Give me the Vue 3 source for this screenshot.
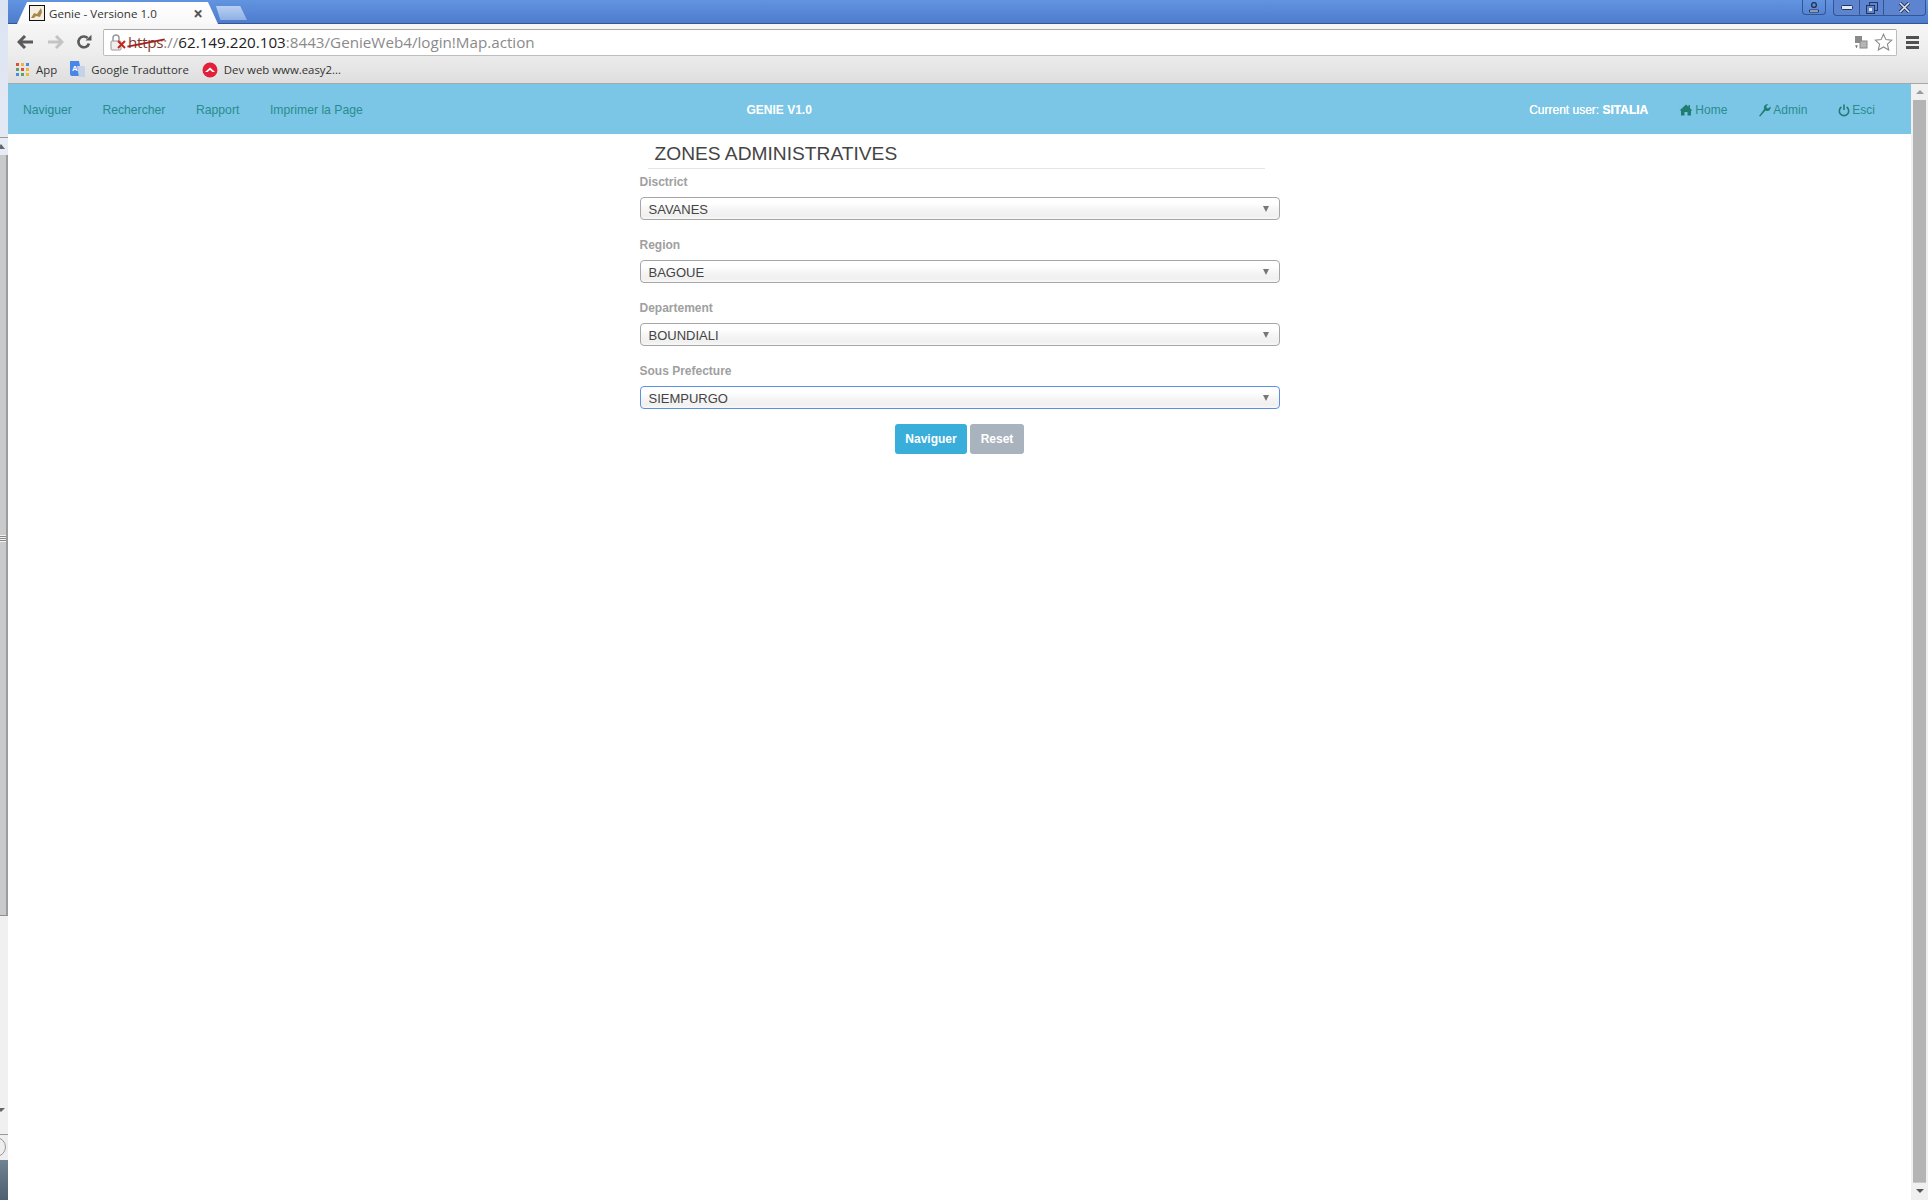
<script setup>
const links = ['Naviguer', 'Rechercher', 'Rapport', 'Imprimer la Page']
const fields = [
  { label: 'Disctrict', value: 'SAVANES' },
  { label: 'Region', value: 'BAGOUE' },
  { label: 'Departement', value: 'BOUNDIALI' },
  { label: 'Sous Prefecture', value: 'SIEMPURGO', focus: true },
]
const appColors = ['#d9503f', '#f2b632', '#4a8be8', '#58a55c', '#d9503f', '#f2b632', '#4a8be8', '#58a55c', '#f2b632']
</script>

<template>
  <div class="screen">
    <aside class="behind">
      <div class="behind-top"></div>
      <div class="behind-arrow up"></div>
      <div class="behind-thumb"><span class="grip"></span></div>
      <div class="behind-rest"><div class="behind-arrow down"></div></div>
      <div class="behind-round"><span></span></div>
      <div class="behind-task"></div>
    </aside>

    <div class="window">
      <header class="titlebar">
        <div class="tab">
          <svg class="favicon" width="16" height="16" viewBox="0 0 16 16">
            <rect x="0.5" y="0.5" width="15" height="15" fill="#f4efe2" stroke="#111" />
            <path d="M2 13 L5 8 L8 9 L12 3 L13 7 L11 12 L7 11 L5 13 Z" fill="#a8874a" />
          </svg>
          <span class="tab-title">Genie - Versione 1.0</span>
          <span class="tab-close">×</span>
        </div>
        <div class="new-tab"></div>
        <div class="win-controls">
          <div class="win-btn user">
            <svg width="12" height="11" viewBox="0 0 12 11"><circle cx="6" cy="3" r="2.4" fill="none" stroke="#26345a" stroke-width="1.4" /><path d="M1.5 10 V8 H10.5 V10 Z" fill="#fff" stroke="#26345a" /></svg>
          </div>
          <div class="win-group">
            <div class="win-btn min"><svg width="12" height="6" viewBox="0 0 12 6"><rect x="0.5" y="0.5" width="11" height="4" rx="1" fill="#dfe7f5" stroke="#26345a" /></svg></div>
            <div class="win-btn max"><svg width="12" height="12" viewBox="0 0 12 12"><rect x="3.5" y="0.5" width="8" height="8" fill="none" stroke="#26345a" /><rect x="0.5" y="3.5" width="8" height="8" fill="#5c84d0" stroke="#26345a" /><rect x="3" y="6" width="3" height="3" fill="#dfe7f5" /></svg></div>
            <div class="win-btn close"><svg width="13" height="11" viewBox="0 0 13 11"><path d="M2 1 L11 10 M11 1 L2 10" stroke="#26345a" stroke-width="3.4" /><path d="M2 1 L11 10 M11 1 L2 10" stroke="#dfe7f5" stroke-width="1.6" /></svg></div>
          </div>
        </div>
      </header>

      <div class="toolbar">
        <svg class="tool back" width="18" height="14" viewBox="0 0 18 14"><path d="M8 1 L2 7 L8 13 M2 7 H16" fill="none" stroke="#5a5a5a" stroke-width="3" /></svg>
        <svg class="tool fwd" width="18" height="14" viewBox="0 0 18 14"><path d="M10 1 L16 7 L10 13 M16 7 H2" fill="none" stroke="#c4c4c4" stroke-width="3" /></svg>
        <svg class="tool reload" width="16" height="16" viewBox="0 0 16 16"><path d="M13 9.5 A5.4 5.4 0 1 1 11.6 4" fill="none" stroke="#5a5a5a" stroke-width="2.6" /><path d="M9.5 6.5 H15.5 V0.8 Z" fill="#5a5a5a" /></svg>
        <div class="omnibox">
          <svg class="lock" width="19" height="17" viewBox="0 0 19 17">
            <rect x="1" y="7" width="10" height="9" rx="1" fill="#eee" stroke="#999" />
            <path d="M3 7 V4 A3 3 0 0 1 9 4 V7" fill="none" stroke="#999" stroke-width="1.5" />
            <path d="M8 7 L15 14 M15 7 L8 14" stroke="#c4271d" stroke-width="2" />
          </svg>
          <span class="url"><span class="proto">https</span><span class="dim">://</span><span class="host">62.149.220.103</span><span class="dim">:8443/GenieWeb4/login!Map.action</span></span>
          <svg class="translate" width="14" height="15" viewBox="0 0 14 15"><rect x="1" y="1" width="7" height="7" fill="#8a8a8a" /><rect x="6" y="6" width="7" height="7" fill="#b5b5b5" stroke="#888" /><path d="M1 11 H4 M2.5 10 V13" stroke="#888" /></svg>
          <svg class="star" width="19" height="18" viewBox="0 0 19 18"><path d="M9.5 1.2 L11.9 6.6 L17.8 7.2 L13.4 11.2 L14.7 17 L9.5 14 L4.3 17 L5.6 11.2 L1.2 7.2 L7.1 6.6 Z" fill="#fff" stroke="#8a8a8a" stroke-width="1.1" /></svg>
        </div>
        <div class="burger"><i></i><i></i><i></i></div>
      </div>

      <div class="bookmarks">
        <div class="bm bm-app">
          <span class="apps"><i v-for="(c, i) in appColors" :key="i" :style="{ background: c }"></i></span>
          <span>App</span>
        </div>
        <div class="bm bm-trad">
          <svg width="17" height="17" viewBox="0 0 17 17"><path d="M1 0 H10 L13 15 H3 A2 2 0 0 1 1 13 Z" fill="#4a86e8" /><path d="M8 5 H15 A1 1 0 0 1 16 6 V16 H10 Z" fill="#c5d3e8" /><text x="3" y="10" font-size="8" font-family="Liberation Sans" font-weight="700" fill="#fff">A</text></svg>
          <span>Google Traduttore</span>
        </div>
        <div class="bm">
          <svg width="16" height="16" viewBox="0 0 16 16"><circle cx="8" cy="8" r="7.5" fill="#e3203a" /><path d="M3 10 L8 5.5 L13 10 L10.5 10 L8 8 L5.5 10 Z" fill="#fff" /></svg>
          <span>Dev web www.easy2...</span>
        </div>
      </div>

      <div class="viewport">
        <div class="page">
          <nav class="nav">
            <div class="nav-left">
              <a v-for="l in links" :key="l">{{ l }}</a>
            </div>
            <div class="brand">GENIE V1.0</div>
            <div class="nav-right">
              <span class="who">Current user: <b>SITALIA</b></span>
              <a class="ico">
                <svg width="14" height="12" viewBox="0 0 14 12"><path d="M7 0.5 L0.5 6.5 L2 6.5 V11.5 H5.5 V8 H8.5 V11.5 H12 V6.5 H13.5 L11 4.2 V1 H9.5 V2.8 Z" fill="#1f7d72" /></svg>
                Home
              </a>
              <a class="ico">
                <svg width="13" height="13" viewBox="0 0 13 13"><path d="M1 12 L2.2 12.6 L7.5 6.5 A3.4 3.4 0 0 0 12.4 2.4 L10 4.4 L8.4 3.6 L8.4 2 L10.4 0.4 A3.4 3.4 0 0 0 6.2 5 Z" fill="#1f7d72" /></svg>
                Admin
              </a>
              <a class="ico">
                <svg width="12" height="13" viewBox="0 0 12 13"><path d="M3.4 3 A4.7 4.7 0 1 0 8.6 3" fill="none" stroke="#1f7d72" stroke-width="1.6" /><path d="M6 0.6 V6" stroke="#1f7d72" stroke-width="1.6" /></svg>
                Esci
              </a>
            </div>
          </nav>

          <main class="content">
            <h1 class="title">ZONES ADMINISTRATIVES</h1>
            <form class="form" @submit.prevent>
              <div v-for="f in fields" :key="f.label" class="field">
                <label>{{ f.label }}</label>
                <div class="select" :class="{ focus: f.focus }">
                  <span>{{ f.value }}</span>
                  <i class="caret"></i>
                </div>
              </div>
              <div class="actions">
                <button class="btn primary">Naviguer</button>
                <button class="btn muted">Reset</button>
              </div>
            </form>
          </main>
        </div>

        <div class="scroll">
          <div class="arrow up"></div>
          <div class="thumb"></div>
          <div class="arrow down"></div>
        </div>
      </div>
    </div>
  </div>
</template>

<style scoped>
.screen {
  display: flex;
  width: 1928px;
  height: 1200px;
  overflow: hidden;
  background: #fff;
  font-family: "Liberation Sans", Arial, sans-serif;
}

/* sliver of the window behind */
.behind {
  width: 8px;
  flex: none;
  display: flex;
  flex-direction: column;
  background: #e6ecf6;
}
.behind-top {
  height: 137px;
  flex: none;
  background: linear-gradient(#dbe4f2, #e4e9f4);
  border-bottom: 1px solid #9a9a9a;
}
.behind .behind-arrow {
  width: 0;
  height: 0;
  flex: none;
  border-left: 4px solid transparent;
  border-right: 4px solid transparent;
  margin-left: -3px;
}
.behind-arrow.up {
  margin-top: 6px;
  margin-bottom: 6px;
  border-bottom: 5px solid #666;
}
.behind-arrow.down {
  margin-top: 192px;
  border-top: 4px solid #666;
}
.behind-thumb {
  height: 761px;
  flex: none;
  background: #c9cacc;
  border-right: 2px solid #9c9c9c;
  border-bottom: 1px solid #8f8f8f;
  box-sizing: border-box;
  padding-top: 380px;
}
.grip {
  display: block;
  width: 6px;
  height: 7px;
  background: repeating-linear-gradient(#f2f2f2 0 1px, #8a8a8a 1px 2px);
}
.behind-rest {
  flex: 1;
  background: #f0f0f0;
  border-bottom: 1px solid #999;
}
.behind-round {
  height: 25px;
  flex: none;
  background: #eee;
  position: relative;
  overflow: hidden;
}
.behind-round span {
  position: absolute;
  left: -14px;
  top: 2px;
  width: 18px;
  height: 18px;
  border: 1px solid #999;
  border-radius: 50%;
}
.behind-task {
  height: 40px;
  flex: none;
  background: linear-gradient(#6f8293, #4f6070);
}

.window {
  flex: 1;
  min-width: 0;
  display: flex;
  flex-direction: column;
}

.titlebar {
  height: 24px;
  flex: none;
  display: flex;
  align-items: flex-end;
  background: linear-gradient(#6294e0, #4d7bcd);
  border-bottom: 1px solid #34558f;
  box-sizing: border-box;
  padding-left: 9px;
}
.tab {
  width: 201px;
  height: 22px;
  margin-bottom: -1px;
  display: flex;
  align-items: center;
  gap: 4px;
  padding: 0 15px 0 15px;
  box-sizing: border-box;
  background: linear-gradient(#fff, #f8f8f8);
  clip-path: polygon(0 100%, 5% 0, 95% 0, 100% 100%);
  font-family: "Open Sans", sans-serif;
  font-size: 11.6px;
  color: #333;
}
.favicon { flex: none; margin-left: -3px; }
.tab-title { flex: 1; white-space: nowrap; }
.tab-close { font-size: 17px; font-weight: 700; color: #555; line-height: 1; }
.new-tab {
  width: 31px;
  height: 14px;
  margin-left: -2px;
  margin-bottom: 3px;
  background: linear-gradient(#b8cff2, #8fb0e6);
  clip-path: polygon(0 0, 78% 0, 100% 100%, 14% 100%);
}
.win-controls {
  margin-left: auto;
  align-self: flex-start;
  display: flex;
  gap: 7px;
  margin-right: 2px;
}
.win-group {
  display: flex;
  border: 1px solid #34558f;
  border-top: 0;
  border-radius: 0 0 4px 4px;
  background: #5c84d0;
}
.win-btn {
  height: 15px;
  display: flex;
  align-items: center;
  justify-content: center;
  box-sizing: border-box;
}
.user {
  width: 24px;
  border: 1px solid #34558f;
  border-top: 0;
  border-radius: 0 0 4px 4px;
}
.min { width: 25px; }
.max { width: 25px; border-left: 1px solid #34558f; border-right: 1px solid #34558f; }
.close { width: 41px; }

.toolbar {
  height: 32px;
  flex: none;
  display: flex;
  align-items: center;
  background: linear-gradient(#f6f6f6, #ececec);
  padding: 4px 0 0 9px;
  box-sizing: border-box;
}
.tool { flex: none; }
.fwd { margin-left: 11px; }
.reload { margin-left: 12px; }
.omnibox {
  width: 1794px;
  height: 27px;
  margin-left: 11px;
  display: flex;
  align-items: center;
  background: #fff;
  border: 1px solid #bdbdbd;
  border-top-color: #a6a6a6;
  border-radius: 2px;
  box-sizing: border-box;
  padding: 0 3px 0 6px;
  flex: none;
}
.url {
  margin-left: -1px;
  flex: 1;
  font-family: "Open Sans", sans-serif;
  font-size: 15.2px;
  white-space: nowrap;
  color: #222;
}
.proto { color: #7e3b33; position: relative; letter-spacing: -0.3px; }
.proto::after {
  content: "";
  position: absolute;
  left: -1px;
  right: -2px;
  top: 50%;
  height: 1.5px;
  background: #a3201a;
  transform: rotate(-11deg);
}
.dim { color: #8a8a8a; }
.host { color: #222; }
.translate { margin-right: 6px; }
.burger {
  width: 13px;
  margin-left: 9px;
  display: flex;
  flex-direction: column;
  gap: 2px;
}
.burger i { height: 3px; background: #505050; display: block; }

.bookmarks {
  height: 28px;
  flex: none;
  display: flex;
  align-items: center;
  gap: 12px;
  padding-left: 8px;
  background: linear-gradient(#ececec, #dedede);
  border-bottom: 1px solid #a8a8a8;
  box-sizing: border-box;
  font-family: "Open Sans", sans-serif;
  font-size: 11.4px;
  color: #333;
}
.bm { display: flex; align-items: center; gap: 6px; }
.bm-app { gap: 7px; }
.bm-trad { gap: 5px; margin-right: 1px; }
.apps {
  width: 13px;
  display: grid;
  grid-template-columns: repeat(3, 3px);
  gap: 2px;
}
.apps i { width: 3px; height: 3px; display: block; }

.viewport {
  flex: 1;
  min-height: 0;
  display: flex;
}
.page { flex: 1; min-width: 0; }

.nav {
  height: 50px;
  box-sizing: border-box;
  padding-top: 2px;
  background: #7bc6e6;
  display: grid;
  grid-template-columns: 1fr auto 1fr;
  align-items: center;
  font-size: 12px;
}
.nav a { color: #2a8c8c; white-space: nowrap; }
.nav-left { display: flex; gap: 30.6px; padding-left: 15px; font-size: 12.2px; }
.brand {
  color: #fff;
  font-weight: 700;
  margin-left: -213px;
  white-space: nowrap;
}
.nav-right {
  display: flex;
  justify-content: flex-end;
  align-items: center;
  gap: 31px;
  padding-right: 36px;
}
.who { color: #fff; white-space: nowrap; text-shadow: 0 0 0.5px #fff; }
.who b { font-weight: 700; }
.ico { display: flex; align-items: center; gap: 2px; }

.content {
  width: 640px;
  margin: 0 auto;
}
.title {
  margin: 8px 0 0 8px;
  padding: 0 0 2px 7px;
  width: 617px;
  box-sizing: border-box;
  border-bottom: 1px solid #e5e5e5;
  font-size: 19.2px;
  line-height: 24px;
  font-weight: 400;
  color: #444;
}
.form { display: block; }
.field { height: 63px; padding-top: 6px; box-sizing: border-box; }
.field:first-child { height: 57px; margin-top: 6px; padding-top: 0; }
.field label {
  display: block;
  font-size: 12px;
  line-height: 14px;
  font-weight: 700;
  color: #a0a0a0;
  margin-bottom: 8px;
}
.select {
  height: 23px;
  display: flex;
  align-items: center;
  justify-content: space-between;
  padding: 1px 10px 0 8px;
  box-sizing: border-box;
  border: 1px solid #a6a6a6;
  border-radius: 4px;
  background: linear-gradient(#fff 25%, #f5f5f5 55%, #f0f0f0 85%, #f8f8f8);
  font-size: 13px;
  color: #444;
}
.select.focus {
  border-color: #5b8fe0;
}
.caret {
  width: 0;
  height: 0;
  border-left: 3.5px solid transparent;
  border-right: 3.5px solid transparent;
  border-top: 6px solid #777;
}
.actions {
  display: flex;
  justify-content: center;
  gap: 3px;
  margin-top: 3px;
}
.btn {
  height: 30px;
  padding: 0;
  border: 0;
  border-radius: 3px;
  color: #fff;
  font-family: inherit;
  font-size: 12px;
  font-weight: 700;
}
.primary { width: 72px; background: #3aaedb; }
.muted { width: 54px; background: #a9b3be; }

.scroll {
  width: 17px;
  flex: none;
  display: flex;
  flex-direction: column;
  align-items: center;
  background: #f0f0f0;
}
.arrow { width: 0; height: 0; border-left: 4px solid transparent; border-right: 4px solid transparent; flex: none; }
.arrow.up { border-bottom: 4px solid #9a9a9a; margin: 6px 0 6px; }
.arrow.down { border-top: 4px solid #555; margin: 6px 0 7px; }
.thumb {
  flex: 1;
  width: 13px;
  background: #b4b4b4;
  border-bottom: 1px solid #c8c8c8;
}
</style>
